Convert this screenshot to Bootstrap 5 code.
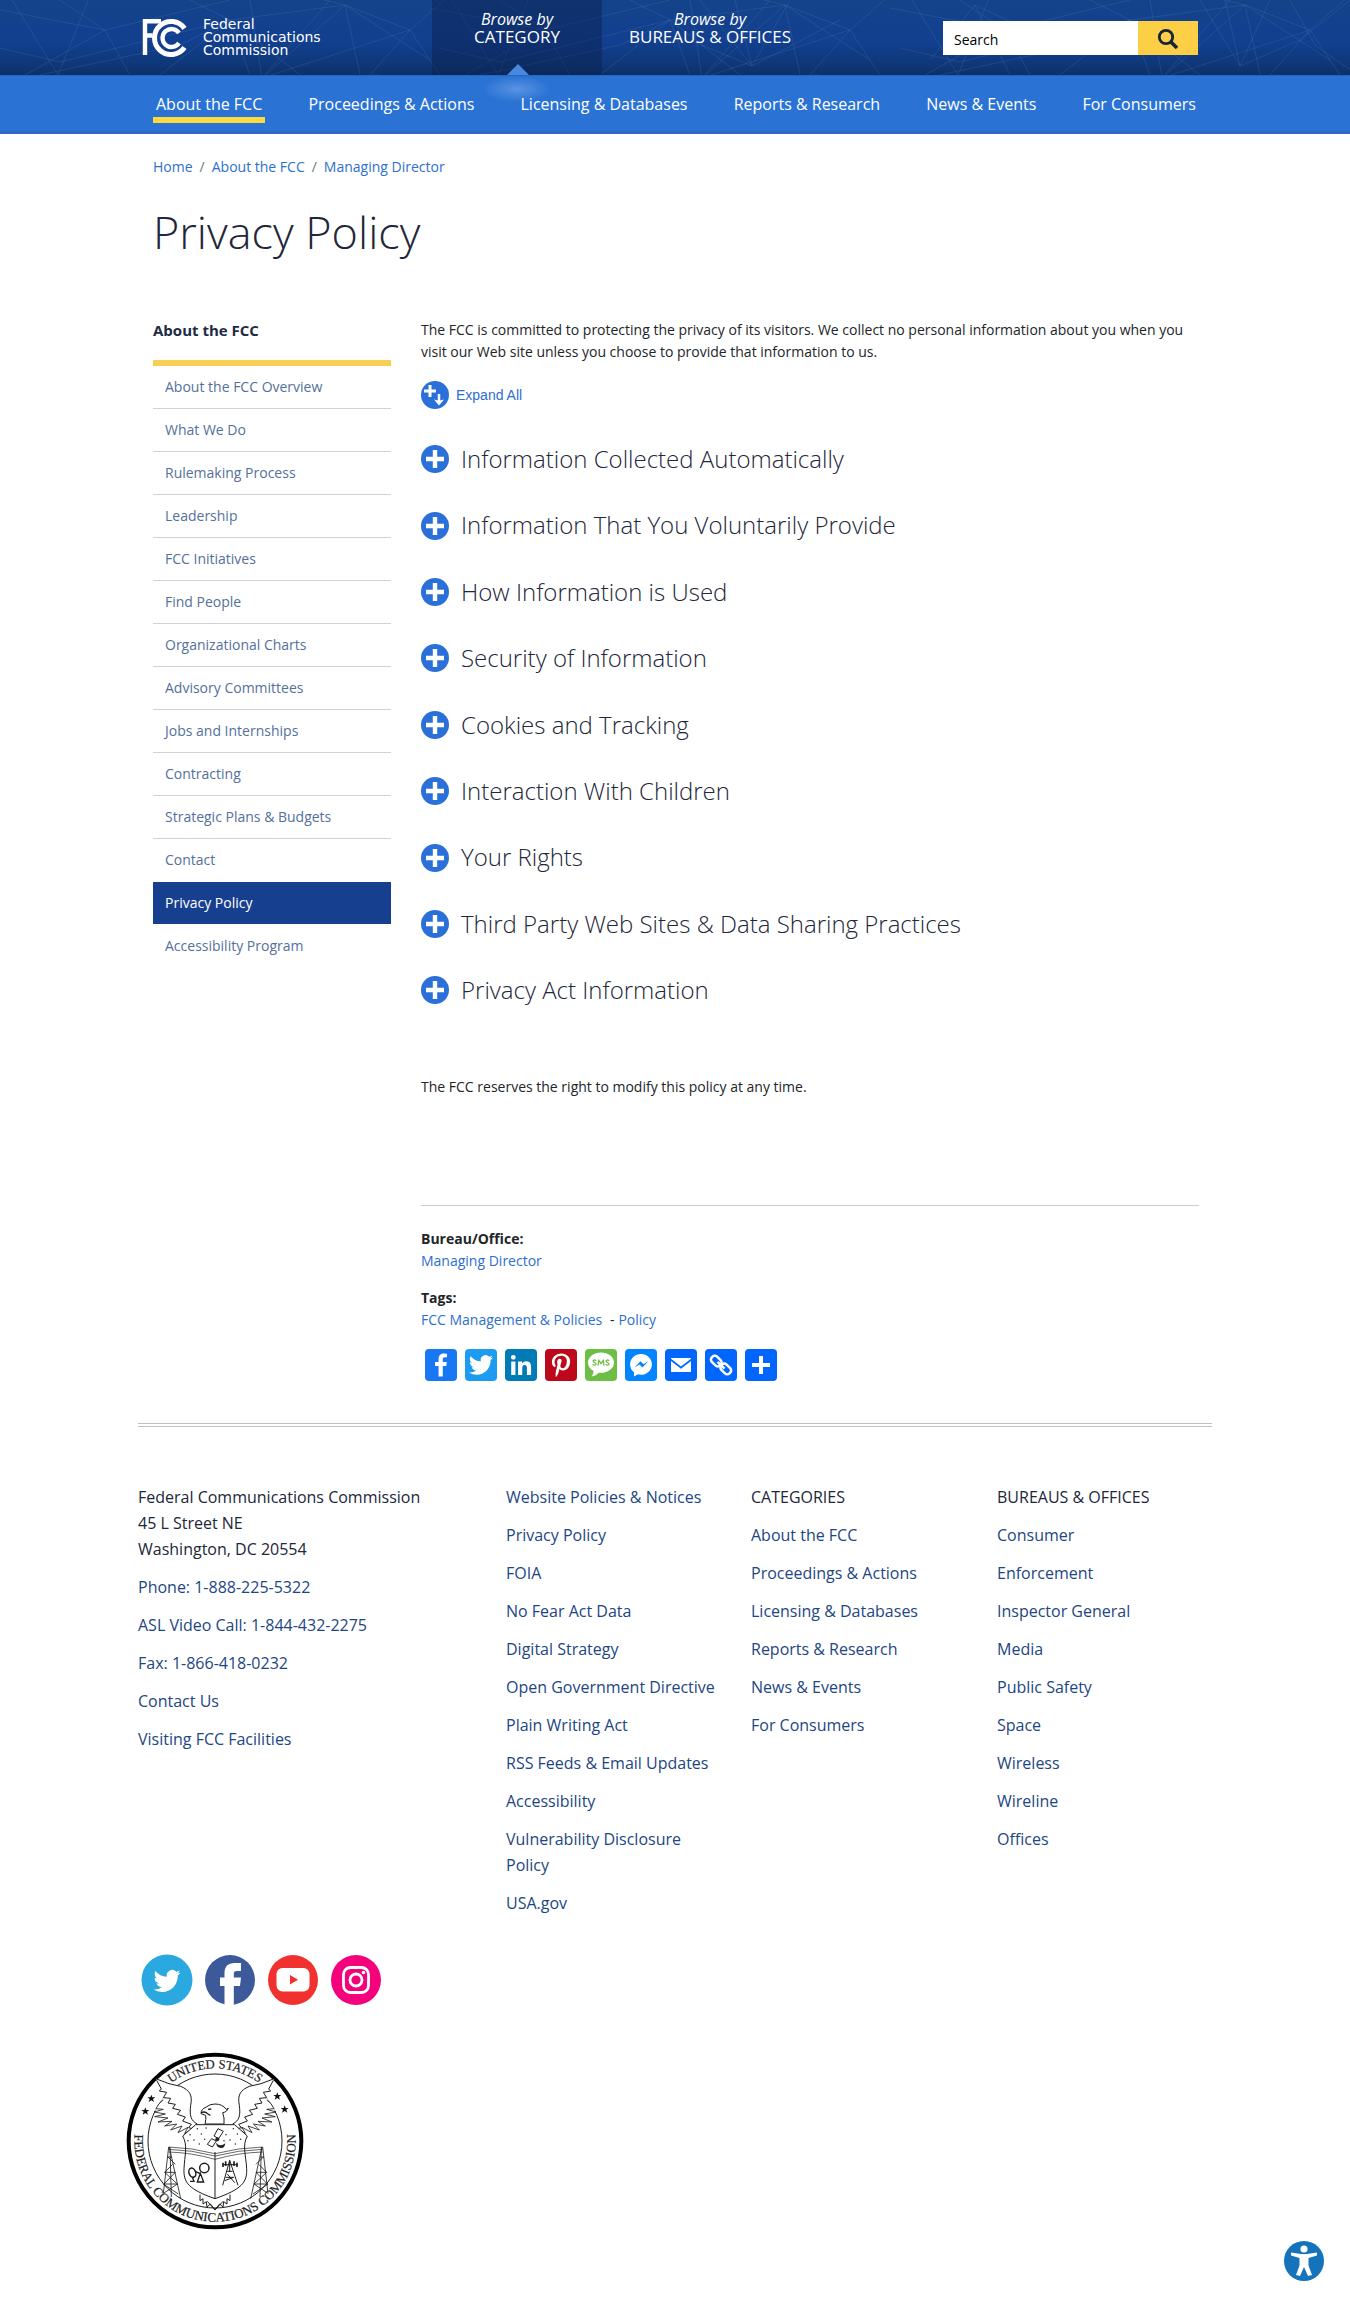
<!DOCTYPE html>
<html lang="en">
<head>
<meta charset="utf-8">
<meta name="viewport" content="width=device-width, initial-scale=1">
<title>Privacy Policy | Federal Communications Commission</title>
<link href="https://cdn.jsdelivr.net/npm/bootstrap@5.3.0/dist/css/bootstrap.min.css" rel="stylesheet">
<style>
  body { font-family: "Open Sans", sans-serif; font-size: 14px; line-height: 22px; color: #212529; background: #fff; }
  a { text-decoration: none; color: #2d6fcf; }
  a:hover { text-decoration: underline; }
  .site-width { max-width: 1074px; margin-left: auto; margin-right: auto; }
  .page-pad { padding-left: 15px; padding-right: 13px; }

  .masthead { background: linear-gradient(#14438a 0%, #123f8f 55%, #0f3879 85%, #0c3068 100%); height: 75px; }
  .masthead-lines { position: absolute; inset: 0; width: 100%; height: 100%; }
  .brand-text { font-family: "DejaVu Sans", sans-serif; font-size: 14px; line-height: 13px; color: #fff; }
  .brand-link { width: 294px; padding: 18px 0 0 4px; gap: 14px; }
  .browse-link { font-size: 17px; line-height: 17px; color: #fff; padding-top: 11px; height: 75px; text-align: center; }
  .browse-link em { font-size: 16px; display: block; }
  .browse-current { width: 170px; background: rgba(10, 32, 76, .45); }
  .browse-current::after { content: ""; position: absolute; left: 75px; bottom: 0; border: 11px solid transparent; border-top: 0; border-bottom-color: #4a88e0; }
  .browse-other { padding-left: 27px; }
  .site-search { width: 255px; height: 34px; margin: 21px 14px 0 auto; }
  .site-search input { border: 0; border-radius: 0; font-size: 14px; color: #000; padding: 3px 11px 0; background: #fff; }
  .site-search input::placeholder { color: #000; opacity: 1; }
  .site-search button { width: 60px; border: 0; border-radius: 0; background: #fdcf47; color: #17233b; padding: 0; }

  .category-bar { background: #2a73d4; height: 59px; border-top: 1px solid #2466bd; border-bottom: 3px solid #3069c4; }
  .category-glow { position: absolute; left: 345px; top: 0; width: 68px; height: 26px; background: radial-gradient(closest-side, rgba(120, 168, 236, .6), transparent); }
  .category-link { color: #fff; font-size: 16px; line-height: 22px; padding: 17px 3px 0; height: 47px; }
  .category-link.current { border-bottom: 6px solid #fddb3e; }

  .crumbs { padding-top: 22px; --bs-breadcrumb-divider-color: #6c757d; --bs-breadcrumb-item-padding-x: 7px; margin: 0; }
  .crumbs .breadcrumb-item { line-height: 22px; }
  .page-title { font-weight: 300; font-size: 45px; line-height: 60px; margin: 24px 0 0; color: #22263a; }
  .page-body { padding-top: 57px; gap: 30px; }
  .side-col { width: 238px; flex: none; }
  .side-title { font-size: 15px; line-height: 22px; font-weight: 700; color: #1d2b45; padding-bottom: 19px; border-bottom: 6px solid #f9cf52; margin: 0; }
  .side-link { display: block; height: 43px; padding: 10px 12px; border-bottom: 1px solid #cfd2d6; color: #54709c; }
  .side-link.plain { border-bottom-color: transparent; }
  .side-link.current { background: #173f8f; color: #fff; border-bottom: 0; height: 42px; margin-bottom: 1px; }

  .expand-btn { font-family: "Liberation Sans", sans-serif; color: #2d6fcf; padding: 0; border: 0; background: none; gap: 7px; margin-top: 18px; font-size: 14px; }
  .topic-list { padding-top: 31px; }
  .topic-title { font-size: 24px; font-weight: 300; line-height: 1.6; margin: 0 0 28px; }
  .topic-btn { padding: 0; border: 0; background: none; color: #22263a; font: inherit; gap: 12px; text-align: left; }
  .reserve { margin: 66px 0 0; }
  .meta-block { margin-top: 107px; border-top: 1px solid #cdcdcd; padding-top: 22px; }
  .meta-block dl { margin: 0 0 15px; }
  .meta-block dd { margin: 0; }
  .share-row { gap: 8px; padding: 3px 4px 0; }
  .share-row a, .social-row a { display: block; line-height: 0; }

  .foot-rule { border-top: 4px double #c0c0c4; margin-top: 42px; }
  .foot { font-size: 16px; line-height: 26px; color: #22263a; }
  .foot-grid { display: grid; grid-template-columns: 368fr 245fr 246fr 215fr; padding-top: 57px; }
  .foot a { color: #1d4684; }
  .foot-col > * { margin: 0 0 12px; padding-right: 30px; }
  .social-row { gap: 11px; padding: 26px 3px 0; }
  .seal-wrap { margin: 46px 0 80px -12px; line-height: 0; }
  .access-btn { position: fixed; right: 26px; bottom: 31px; width: 40px; height: 40px; padding: 0; border: 0; background: none; line-height: 0; }
</style>
</head>
<body>
<svg width="0" height="0" class="position-absolute" aria-hidden="true">
  <symbol id="plus" viewBox="0 0 28 28"><circle cx="14" cy="14" r="14" fill="#2a70d8"/><path d="M14 5v18M5 14h18" stroke="#fff" stroke-width="4.4"/></symbol>
  <symbol id="bird" viewBox="0 0 32 32"><path fill="#fff" d="M28 8.56a10 10 0 0 1-2.83.78 4.93 4.93 0 0 0 2.17-2.73c-.95.57-2 .98-3.13 1.2a4.92 4.92 0 0 0-8.4 4.48A13.98 13.98 0 0 1 5.67 7.15a4.93 4.93 0 0 0 1.52 6.58 4.88 4.88 0 0 1-2.23-.62v.06a4.93 4.93 0 0 0 3.95 4.83 4.9 4.9 0 0 1-2.22.08 4.93 4.93 0 0 0 4.6 3.42A9.88 9.88 0 0 1 4 23.54a13.94 13.94 0 0 0 7.55 2.21c9.06 0 14.01-7.5 14.01-14.01l-.02-.64A10 10 0 0 0 28 8.56z"/></symbol>
</svg>

<header>
  <div class="masthead position-relative">
    <svg class="masthead-lines" viewBox="0 0 1350 75" preserveAspectRatio="none" aria-hidden="true" fill="none" stroke="#6f9bd8" stroke-opacity=".17">
      <path id="web" d="M-10 8 105 30 230 0M12 0 58 75 90 -4M25 75 105 30 52 -5M105 30 130 75M0 48 60 62 230 20 300 75M160 75 230 20 250 75M230 20 180 -5M230 20 345 5 430 60M262 78 345 5 300 -6M262 78 410 30 450 -5M262 78 250 0M262 78 330 0M262 78 380 75M370 75 410 30 440 75M410 30 345 5 360 75M40 75 180 45 230 20"/>
      <use href="#web" x="440"/><use href="#web" x="900"/>
      <path d="M752 66 700 0M752 66 735 0M752 66 790 0M752 66 840 20M752 66 690 40M975 5 930 60M975 5 1010 75M975 5 1060 45M1240 66 1200 0M1240 66 1300 40 1350 0M1240 66 1225 0M1240 66 1270 0M1315 45 1350 70M1315 45 1290 0"/>
    </svg>
    <div class="site-width d-flex position-relative">
      <a class="brand-link d-flex align-items-start" href="#">
        <svg width="47" height="40" viewBox="0 0 47 40" fill="none" stroke="#fff" aria-hidden="true">
          <path d="M3 37V3.300H19M3 17.500H10.500" stroke-width="4.400"/>
          <path d="M42.500 10.500A16.500 16.500 0 1 0 42.500 29.500" stroke-width="5"/>
          <path d="M37 15A9 9 0 1 0 37 25" stroke-width="4.300"/>
        </svg>
        <span class="brand-text">Federal<br>Communications<br>Commission</span>
      </a>
      <a class="browse-link browse-current position-relative" href="#"><em>Browse by</em>CATEGORY</a>
      <a class="browse-link browse-other" href="#"><em>Browse by</em>BUREAUS &amp; OFFICES</a>
      <form class="site-search d-flex" role="search">
        <label class="visually-hidden" for="q">Search</label>
        <input class="form-control" id="q" type="search" placeholder="Search">
        <button class="btn flex-shrink-0" type="submit" aria-label="Search">
          <svg width="22" height="22" viewBox="0 0 22 22" fill="none" stroke="currentColor" aria-hidden="true"><circle cx="9" cy="9" r="6.700" stroke-width="2.800"/><path d="M13.500 13.500 20 20" stroke-width="3.600"/></svg>
        </button>
      </form>
    </div>
  </div>
  <nav class="category-bar" aria-label="Categories">
    <div class="site-width page-pad d-flex justify-content-between position-relative">
      <span class="category-glow"></span>
      <a class="category-link current" href="#">About the FCC</a>
      <a class="category-link" href="#">Proceedings &amp; Actions</a>
      <a class="category-link position-relative" href="#">Licensing &amp; Databases</a>
      <a class="category-link" href="#">Reports &amp; Research</a>
      <a class="category-link" href="#">News &amp; Events</a>
      <a class="category-link" href="#">For Consumers</a>
    </div>
  </nav>
</header>

<div class="site-width page-pad">
  <nav aria-label="breadcrumb">
    <ol class="breadcrumb crumbs">
      <li class="breadcrumb-item"><a href="#">Home</a></li>
      <li class="breadcrumb-item"><a href="#">About the FCC</a></li>
      <li class="breadcrumb-item"><a href="#">Managing Director</a></li>
    </ol>
  </nav>
  <h1 class="page-title">Privacy Policy</h1>
  <div class="page-body d-flex">
    <aside class="side-col">
      <h2 class="side-title">About the FCC</h2>
      <nav aria-label="About the FCC">
        <a class="side-link" href="#">About the FCC Overview</a>
        <a class="side-link" href="#">What We Do</a>
        <a class="side-link" href="#">Rulemaking Process</a>
        <a class="side-link" href="#">Leadership</a>
        <a class="side-link" href="#">FCC Initiatives</a>
        <a class="side-link" href="#">Find People</a>
        <a class="side-link" href="#">Organizational Charts</a>
        <a class="side-link" href="#">Advisory Committees</a>
        <a class="side-link" href="#">Jobs and Internships</a>
        <a class="side-link" href="#">Contracting</a>
        <a class="side-link" href="#">Strategic Plans &amp; Budgets</a>
        <a class="side-link plain" href="#">Contact</a>
        <a class="side-link current" href="#" aria-current="page">Privacy Policy</a>
        <a class="side-link plain" href="#">Accessibility Program</a>
      </nav>
    </aside>
    <main class="flex-grow-1">
      <p class="m-0">The FCC is committed to protecting the privacy of its visitors. We collect no personal information about you when you visit our Web site unless you choose to provide that information to us.</p>
      <button class="expand-btn d-flex align-items-center" type="button">
        <svg width="28" height="28" viewBox="0 0 28 28" aria-hidden="true"><circle cx="14" cy="14" r="14" fill="#2a70d8"/><path d="M9 4v12M3 10h12" stroke="#fff" stroke-width="3"/><path d="M18 13v7" stroke="#fff" stroke-width="2.500"/><path d="M13 18.500l5 6 5-6-4 1h-2z" fill="#fff"/></svg>
        Expand All
      </button>
      <div class="topic-list">
        <h3 class="topic-title"><button class="topic-btn d-flex align-items-center" type="button"><svg width="28" height="28" aria-hidden="true"><use href="#plus"/></svg>Information Collected Automatically</button></h3>
        <h3 class="topic-title"><button class="topic-btn d-flex align-items-center" type="button"><svg width="28" height="28" aria-hidden="true"><use href="#plus"/></svg>Information That You Voluntarily Provide</button></h3>
        <h3 class="topic-title"><button class="topic-btn d-flex align-items-center" type="button"><svg width="28" height="28" aria-hidden="true"><use href="#plus"/></svg>How Information is Used</button></h3>
        <h3 class="topic-title"><button class="topic-btn d-flex align-items-center" type="button"><svg width="28" height="28" aria-hidden="true"><use href="#plus"/></svg>Security of Information</button></h3>
        <h3 class="topic-title"><button class="topic-btn d-flex align-items-center" type="button"><svg width="28" height="28" aria-hidden="true"><use href="#plus"/></svg>Cookies and Tracking</button></h3>
        <h3 class="topic-title"><button class="topic-btn d-flex align-items-center" type="button"><svg width="28" height="28" aria-hidden="true"><use href="#plus"/></svg>Interaction With Children</button></h3>
        <h3 class="topic-title"><button class="topic-btn d-flex align-items-center" type="button"><svg width="28" height="28" aria-hidden="true"><use href="#plus"/></svg>Your Rights</button></h3>
        <h3 class="topic-title"><button class="topic-btn d-flex align-items-center" type="button"><svg width="28" height="28" aria-hidden="true"><use href="#plus"/></svg>Third Party Web Sites &amp; Data Sharing Practices</button></h3>
        <h3 class="topic-title"><button class="topic-btn d-flex align-items-center" type="button"><svg width="28" height="28" aria-hidden="true"><use href="#plus"/></svg>Privacy Act Information</button></h3>
      </div>
      <p class="reserve">The FCC reserves the right to modify this policy at any time.</p>
      <div class="meta-block">
        <dl><dt>Bureau/Office:</dt><dd><a href="#">Managing Director</a></dd></dl>
        <dl><dt>Tags:</dt><dd><a href="#">FCC Management &amp; Policies</a> <span class="px-1">-</span><a href="#">Policy</a></dd></dl>
        <div class="share-row d-flex">
          <a href="#" aria-label="Facebook"><svg width="32" height="32" viewBox="0 0 32 32"><rect width="32" height="32" rx="4" fill="#1877f2"/><path fill="#fff" d="M17.780 27.500V17.010h3.520l.530-4.090h-4.050v-2.610c0-1.180.330-1.990 2.030-1.990h2.160V4.660a29 29 0 0 0-3.150-.160c-3.120 0-5.260 1.900-5.260 5.400v3.010h-3.530v4.090h3.530V27.500h4.220z"/></svg></a>
          <a href="#" aria-label="Twitter"><svg width="32" height="32" viewBox="0 0 32 32"><rect width="32" height="32" rx="4" fill="#1d9bf0"/><use href="#bird" width="32" height="32"/></svg></a>
          <a href="#" aria-label="LinkedIn"><svg width="32" height="32" viewBox="0 0 32 32"><rect width="32" height="32" rx="4" fill="#007bb5"/><path fill="#fff" d="M6.230 12.610h4.190v13.480H6.230V12.610zm2.100-6.700a2.430 2.430 0 1 1 0 4.860 2.430 2.430 0 0 1 0-4.860M13.040 12.610h4.020v1.840h.060c.56-1.060 1.930-2.180 3.970-2.180 4.240 0 5.020 2.800 5.020 6.420v7.400h-4.180v-6.560c0-1.560-.030-3.580-2.180-3.580-2.180 0-2.520 1.710-2.520 3.470v6.670h-4.180V12.610z"/></svg></a>
          <a href="#" aria-label="Pinterest"><svg width="32" height="32" viewBox="0 0 32 32"><rect width="32" height="32" rx="4" fill="#bd081c"/><path fill="#fff" d="M16.540 4.500C10.110 4.500 6.900 9.100 6.900 12.940c0 2.320.88 4.390 2.770 5.160.31.130.59 0 .68-.34l.27-1.080c.09-.34.060-.46-.19-.76-.54-.64-.89-1.470-.89-2.650 0-3.420 2.560-6.480 6.660-6.480 3.630 0 5.630 2.220 5.630 5.190 0 3.900-1.730 7.200-4.290 7.200-1.420 0-2.480-1.170-2.140-2.610.41-1.720 1.190-3.570 1.190-4.810 0-1.110-.59-2.040-1.830-2.040-1.450 0-2.610 1.500-2.610 3.510 0 1.280.43 2.150.43 2.150l-1.740 7.380c-.52 2.190-.080 4.870-.040 5.140.020.160.230.200.32.080.13-.17 1.850-2.300 2.440-4.420.17-.60.95-3.710.95-3.710.47.900 1.850 1.690 3.310 1.690 4.360 0 7.320-3.970 7.320-9.290 0-4.020-3.410-7.770-8.590-7.770z"/></svg></a>
          <a href="#" aria-label="SMS"><svg width="32" height="32" viewBox="0 0 32 32"><rect width="32" height="32" rx="4" fill="#6cbe45"/><path fill="#fff" d="M16 3.500C8.700 3.500 3 8 3 13.700c0 3.500 2.200 6.500 5.600 8.300-.2 2-.7 4-2 5.500 3-.5 5.500-2 7-3.800 8.700.9 15.400-4 15.400-10S23.300 3.500 16 3.500z"/><path d="M11.300 11.500q-3-1.200-3.200.5 0 1 1.600 1.500t1.300 1.700q-.8 1.500-3.500.3M13 16.500l.8-5 2.200 3.200 2.300-3.200.7 5M24.300 11.500q-3-1.200-3.200.5 0 1 1.600 1.500t1.300 1.700q-.8 1.500-3.500.3" fill="none" stroke="#6cbe45" stroke-width="1.300"/></svg></a>
          <a href="#" aria-label="Messenger"><svg width="32" height="32" viewBox="0 0 32 32"><rect width="32" height="32" rx="4" fill="#0084ff"/><path fill="#fff" d="M16 5C9.990 5 5.120 9.650 5.120 15.390c0 3.200 1.500 6.050 3.860 7.960V27.500l3.900-2.200c.99.280 2.040.43 3.120.43 6.010 0 10.880-4.600 10.880-10.340S22.010 5 16 5z"/><path fill="#0084ff" d="M9.500 18.500l6-6.300 2.900 3 4.800-3-5.800 6.300-2.900-3z"/></svg></a>
          <a href="#" aria-label="Email"><svg width="32" height="32" viewBox="0 0 32 32"><rect width="32" height="32" rx="4" fill="#0166ff"/><path fill="#fff" d="M6 9h20v.8L16 17.500 6 9.800zM6 12v11h20V12l-10 7.700z"/></svg></a>
          <a href="#" aria-label="Copy link"><svg width="32" height="32" viewBox="0 0 32 32"><rect width="32" height="32" rx="4" fill="#0166ff"/><g fill="none" stroke="#fff" stroke-width="2.500"><rect x="5.500" y="8.300" width="11.500" height="7.400" rx="3.200" transform="rotate(45 11.200 12)"/><rect x="15" y="16.300" width="11.500" height="7.400" rx="3.200" transform="rotate(45 20.800 20)"/><path d="M12.500 12.800l7 6.800"/></g></svg></a>
          <a href="#" aria-label="Share"><svg width="32" height="32" viewBox="0 0 32 32"><rect width="32" height="32" rx="4" fill="#0166ff"/><path d="M16 7v18M7 16h18" stroke="#fff" stroke-width="4"/></svg></a>
        </div>
      </div>
    </main>
  </div>
</div>

<footer class="site-width foot">
  <div class="foot-rule"></div>
  <div class="foot-grid">
    <div class="foot-col">
      <p>Federal Communications Commission<br>45 L Street NE<br>Washington, DC 20554</p>
      <p><a href="#">Phone: 1-888-225-5322</a></p>
      <p><a href="#">ASL Video Call: 1-844-432-2275</a></p>
      <p><a href="#">Fax: 1-866-418-0232</a></p>
      <p><a href="#">Contact Us</a></p>
      <p><a href="#">Visiting FCC Facilities</a></p>
    </div>
    <div class="foot-col">
      <p><a href="#">Website Policies &amp; Notices</a></p>
      <p><a href="#">Privacy Policy</a></p>
      <p><a href="#">FOIA</a></p>
      <p><a href="#">No Fear Act Data</a></p>
      <p><a href="#">Digital Strategy</a></p>
      <p><a href="#">Open Government Directive</a></p>
      <p><a href="#">Plain Writing Act</a></p>
      <p><a href="#">RSS Feeds &amp; Email Updates</a></p>
      <p><a href="#">Accessibility</a></p>
      <p><a href="#">Vulnerability Disclosure Policy</a></p>
      <p><a href="#">USA.gov</a></p>
    </div>
    <div class="foot-col">
      <p>CATEGORIES</p>
      <p><a href="#">About the FCC</a></p>
      <p><a href="#">Proceedings &amp; Actions</a></p>
      <p><a href="#">Licensing &amp; Databases</a></p>
      <p><a href="#">Reports &amp; Research</a></p>
      <p><a href="#">News &amp; Events</a></p>
      <p><a href="#">For Consumers</a></p>
    </div>
    <div class="foot-col">
      <p>BUREAUS &amp; OFFICES</p>
      <p><a href="#">Consumer</a></p>
      <p><a href="#">Enforcement</a></p>
      <p><a href="#">Inspector General</a></p>
      <p><a href="#">Media</a></p>
      <p><a href="#">Public Safety</a></p>
      <p><a href="#">Space</a></p>
      <p><a href="#">Wireless</a></p>
      <p><a href="#">Wireline</a></p>
      <p><a href="#">Offices</a></p>
    </div>
  </div>
  <div class="social-row d-flex">
    <a href="#" aria-label="Twitter"><svg width="52" height="52" viewBox="0 0 52 52"><circle cx="26" cy="26" r="25.500" fill="#29a9e0"/><use href="#bird" x="8" y="9" width="36" height="36"/></svg></a>
    <a href="#" aria-label="Facebook"><svg width="52" height="52" viewBox="0 0 52 52"><circle cx="26" cy="26" r="25" fill="#3c5a99"/><path fill="#fff" d="M20.500 51.500V32H16v-8.500h4.500V19c0-6.500 3.500-10 10-10H37v8h-4.500c-2 0-2.700 1-2.700 2.700v3.800H37L36 32h-6.200v19.500z"/></svg></a>
    <a href="#" aria-label="YouTube"><svg width="52" height="52" viewBox="0 0 52 52"><circle cx="26" cy="26" r="25" fill="#f1312f"/><rect x="9.500" y="14" width="33" height="23.500" rx="6" fill="#fff"/><path fill="#f1312f" d="M23 21v9.500l8-4.700z"/></svg></a>
    <a href="#" aria-label="Instagram"><svg width="52" height="52" viewBox="0 0 52 52"><circle cx="26" cy="26" r="25" fill="#f3027c"/><g fill="none" stroke="#fff" stroke-width="2.800"><rect x="13.500" y="13.500" width="25" height="25" rx="7"/><circle cx="26" cy="26" r="6"/></g><circle cx="33.500" cy="18.500" r="1.800" fill="#fff"/></svg></a>
  </div>
  <div class="seal-wrap">
    <svg width="178" height="178" viewBox="76 340 534 534" role="img" aria-label="Federal Communications Commission seal" fill="none" stroke="#1c1c1c" stroke-width="3">
      <circle cx="343" cy="607" r="259" stroke="#000" stroke-width="12"/>
      <circle cx="343" cy="607" r="201"/>
      <path id="arc-top" d="M125 607a218 218 0 0 1 436 0" stroke="none"/>
      <path id="arc-low" d="M115 526a242 242 0 1 0 456 0" stroke="none"/>
      <g fill="#222" stroke="#222" stroke-width=".6" font-family="Liberation Serif, serif" text-anchor="middle">
        <text font-size="38"><textPath href="#arc-top" startOffset="50%">UNITED STATES</textPath></text>
        <text font-size="39"><textPath href="#arc-low" startOffset="50%">FEDERAL COMMUNICATIONS COMMISSION</textPath></text>
      </g>
      <g fill="#111" stroke="none">
        <path id="star" d="M152 468l3 8 9 0-7 5 3 9-8-5-8 5 3-9-7-5 9 0z"/>
        <use href="#star" x="-18" y="38"/><use href="#star" x="378" y="-7"/><use href="#star" x="400" y="32"/>
      </g>
      <g id="wing">
        <path fill="#fff" stroke="none" d="M165 420 205 435 240 443C268 455 276 470 270 500 266 530 270 546 290 556L250 602 258 590 240 590 235 603 230 588 215 592 178 572 160 545 165 510 188 478 175 458 188 455z"/>
        <path d="M165 420 205 435 240 443C268 455 276 470 270 500 266 530 270 546 290 556"/>
        <path d="M168 425l14 26-6 6 22 4-10 16 22 2-8 14 22 4-8 12 24 6-10 12 24 8-8 12 26 10-8 10 22 6-8 12"/>
        <path d="M188 484q-14 8-22 26l22 2-28 8 34 6-32 8 40 4-30 12 42-2-22 14 36-6-18 18 34-12-12 20 30-16-10 18 26-14-8 20 20-8-4 16" stroke-width="2.500"/>
      </g>
      <use href="#wing" transform="matrix(-1 0 0 1 686 0)"/>
      <path fill="#fff" d="M313 556q4-14 2-26l-14-5q0-14 16-20 10-9 26-9 22 0 34 16 7 0 5-4-2 12-16 14 6 15 4 34z"/>
      <path d="M301 522q9-4 16 0 8 6 12 8M322 512l10-1" stroke-width="4"/>
      <g stroke-width="2.500">
        <path d="M204 625 188 765M206 625 240 780M208 625 212 775M202 655l22 22M200 655h12M216 677l-24 24M192 701h32M192 701l38 35M230 736l-42 0M188 736l45 30M224 701l-34 35M230 736l-40 27"/>
        <path d="M486 625 502 765M484 625 450 780M482 625 478 775M488 655l-22 22M490 655h-12M474 677l24 24M498 701h-32M498 701l-38 35M460 736l42 0M502 736l-45 30M466 701l34 35M460 736l40 27"/>
      </g>
      <path fill="#fff" d="M285 558H402L440 592C424 620 436 650 438 690 440 732 422 752 343 780 264 752 248 732 250 690 252 650 262 620 246 592z"/>
      <path d="M204 625q70 2 139 20 70-18 143-20M204 632q70 2 139 20 70-18 143-20M204 640q70 2 139 22 70-20 143-22" stroke-width="2"/>
      <path d="M343 640V778"/>
      <g fill="#222" stroke="none">
        <path d="M352 570l16 8-14 22-14-8zM333 600l14 7-12 18-15-8z" fill="#fff" stroke="#222" stroke-width="3"/><path d="M346 612q12 14 28 2-2 16-14 14-12-2-14-16z"/><circle cx="350" cy="602" r="6"/>
        <g id="dots"><circle cx="290" cy="570" r="2.200"/><circle cx="316" cy="568" r="2.200"/><circle cx="268" cy="588" r="2.200"/><circle cx="302" cy="586" r="2.200"/><circle cx="280" cy="604" r="2.200"/><circle cx="312" cy="602" r="2.200"/><circle cx="262" cy="606" r="2.200"/><circle cx="296" cy="616" r="2.200"/></g>
        <use href="#dots" x="108"/>
      </g>
      <g stroke-width="4.500"><ellipse cx="275" cy="702" rx="10" ry="14" transform="rotate(-20 275 702)"/><circle cx="311" cy="688" r="14"/><path d="M290 730l9-26 10 26zM275 716l5 12h-12M299 705l-14-6" stroke-width="4"/></g>
      <g stroke-width="3"><path d="M366 740 387 665 412 740M375 716h24M372 726l27-10M378 698h18M380 706l22 26M387 665v35"/><path d="M367 672v13M375 668v14M400 668v14M409 672v13" stroke-width="5"/><path d="M365 678h45"/></g>
      <path d="M298 768v18l9-6 0 16 10-7 2 16 10-9 14 16 14-16 10 9 2-16 10 7 0-16 9 6v-18M320 788l23 26 24-26"/>
    </svg>
  </div>
</footer>

<button class="access-btn" type="button" aria-label="Accessibility options">
  <svg width="40" height="40" viewBox="0 0 40 40" aria-hidden="true"><circle cx="20" cy="20" r="20" fill="#1473bb"/><circle cx="20" cy="8" r="3.600" fill="#fff"/><path fill="#fff" d="M7 11.500l10 1.500h6l10-1.500v3L24.500 17v7.500L28 34l-4 1-4-9-4 9-4-1 3.500-9.500V17L7 14.500z"/></svg>
</button>
<script src="https://cdn.jsdelivr.net/npm/bootstrap@5.3.0/dist/js/bootstrap.bundle.min.js"></script>
</body>
</html>
